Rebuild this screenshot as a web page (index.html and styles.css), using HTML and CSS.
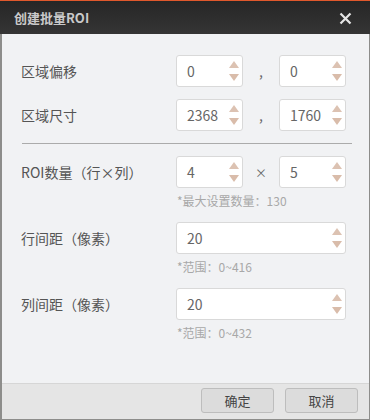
FILE: index.html
```html
<!DOCTYPE html>
<html lang="zh">
<head>
<meta charset="utf-8">
<title>创建批量ROI</title>
<link rel="stylesheet" href="styles.css">
</head>
<body>
<div class="dialog">
  <div class="titlebar">
    <span class="title">创建批量ROI</span>
    <svg class="close" width="13" height="13" viewBox="0 0 13 13"><path d="M1.5 1.5 L11.5 11.5 M11.5 1.5 L1.5 11.5" stroke="#e6e6e6" stroke-width="2.2" fill="none"/></svg>
  </div>
  <div class="content">
    <div class="row">
      <div class="label">区域偏移</div>
      <div class="spin small"><span class="val">0</span><span class="arrows"><i class="up"></i><i class="down"></i></span></div>
      <div class="sep">,</div>
      <div class="spin small"><span class="val">0</span><span class="arrows"><i class="up"></i><i class="down"></i></span></div>
    </div>
    <div class="row">
      <div class="label">区域尺寸</div>
      <div class="spin small"><span class="val">2368</span><span class="arrows"><i class="up"></i><i class="down"></i></span></div>
      <div class="sep">,</div>
      <div class="spin small"><span class="val">1760</span><span class="arrows"><i class="up"></i><i class="down"></i></span></div>
    </div>
    <div class="divider"></div>
    <div class="row">
      <div class="label">ROI数量（行×列）</div>
      <div class="spin small"><span class="val">4</span><span class="arrows"><i class="up"></i><i class="down"></i></span></div>
      <div class="sep times">×</div>
      <div class="spin small"><span class="val">5</span><span class="arrows"><i class="up"></i><i class="down"></i></span></div>
    </div>
    <div class="hint">*最大设置数量：130</div>
    <div class="row">
      <div class="label">行间距（像素）</div>
      <div class="spin wide"><span class="val">20</span><span class="arrows"><i class="up"></i><i class="down"></i></span></div>
    </div>
    <div class="hint">*范围：0~416</div>
    <div class="row">
      <div class="label">列间距（像素）</div>
      <div class="spin wide"><span class="val">20</span><span class="arrows"><i class="up"></i><i class="down"></i></span></div>
    </div>
    <div class="hint">*范围：0~432</div>
  </div>
  <div class="footer">
    <button class="btn">确定</button>
    <button class="btn">取消</button>
  </div>
</div>
</body>
</html>
```
FILE: styles.css
```css
* { box-sizing: border-box; }
html, body { margin: 0; padding: 0; }
body {
  width: 370px;
  height: 420px;
  font-family: "Noto Sans CJK SC", "Noto Sans", sans-serif;
  background: #f1f2f4;
}
.dialog {
  width: 370px;
  height: 420px;
  display: flex;
  flex-direction: column;
  border-left: 2px solid #8d8d8b;
  border-right: 1px solid #8d8d8b;
  border-bottom: 1px solid #8d8d8b;
  background: #f1f2f4;
}
.titlebar {
  height: 34px;
  flex: none;
  margin-left: -2px;
  margin-right: -1px;
  border-top: 1px solid #e0582c;
  background: linear-gradient(#262626, #353535);
  display: flex;
  align-items: center;
  justify-content: space-between;
  padding: 0 18px 0 14px;
}
.title {
  color: #c9c9c9;
  font-size: 13px;
  font-weight: bold;
}
.close { display: block; margin-top: 2px; }
.content {
  flex: 1;
  padding: 21px 0 0 19px;
}
.row {
  display: flex;
  align-items: center;
  height: 32px;
  margin-bottom: 12px;
}
.label {
  width: 155px;
  font-size: 14px;
  color: #555;
}
.spin {
  height: 32px;
  background: #fff;
  border: 1px solid #d9d9d9;
  border-radius: 3px;
  display: flex;
  align-items: center;
  padding: 0 3px 0 10px;
}
.spin.small { width: 67px; }
.spin.wide { width: 170px; }
.val {
  flex: 1;
  font-size: 14px;
  color: #666;
}
.arrows {
  width: 11px;
  display: flex;
  flex-direction: column;
  align-items: center;
  gap: 6px;
}
.arrows i {
  display: block;
  width: 0;
  height: 0;
  border-left: 5px solid transparent;
  border-right: 5px solid transparent;
}
.arrows .up { border-bottom: 7px solid #dcc2b2; }
.arrows .down { border-top: 7px solid #d9bcaa; }
.sep {
  width: 36px;
  text-align: center;
  color: #666;
  font-size: 14px;
}
.times { font-size: 12px; }
.divider {
  height: 1px;
  width: 330px;
  background: #ababab;
  margin: 0 0 12px 1px;
}
.hint {
  margin: -8px 0 12px 156px;
  height: 18px;
  line-height: 18px;
  font-size: 12px;
  color: #a8a8a8;
}
.footer {
  height: 36px;
  flex: none;
  border-top: 1px solid #d6d6d6;
  background: #e5e5e5;
  display: flex;
  justify-content: flex-end;
  align-items: flex-start;
  gap: 11px;
  padding: 4px 11px 0 0;
}
.btn {
  width: 73px;
  height: 25px;
  background: #dcdcdc;
  border: 1px solid #bdbdbd;
  border-radius: 3px;
  font-family: "Noto Sans CJK SC", sans-serif;
  font-size: 13px;
  color: #444;
  padding: 0;
}
```
